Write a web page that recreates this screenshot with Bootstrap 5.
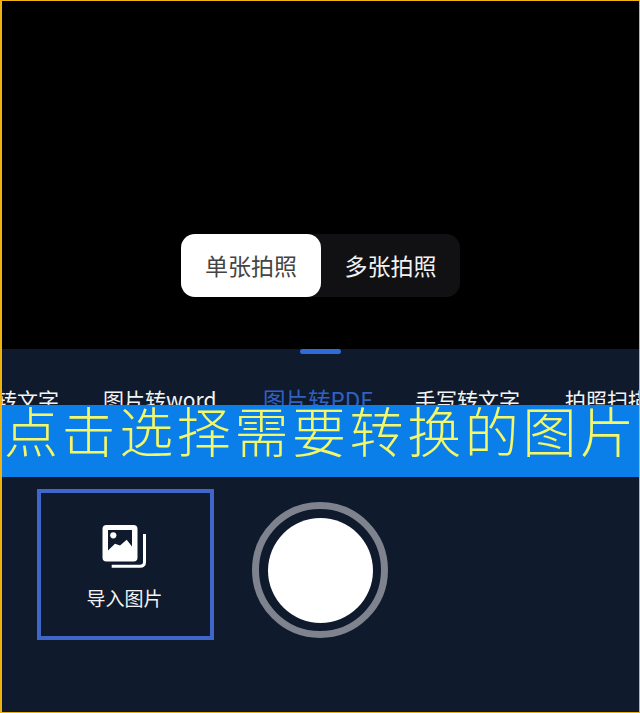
<!DOCTYPE html>
<html lang="zh-CN">
<head>
<meta charset="utf-8">
<title>图片转PDF</title>
<link href="https://cdn.jsdelivr.net/npm/bootstrap@5.3.0/dist/css/bootstrap.min.css" rel="stylesheet">
<style>
html,body{height:100%;margin:0;background:#000;font-family:"Noto Sans CJK SC","Liberation Sans",sans-serif;}
.shell{height:713px;width:640px;border:solid #eeb311;border-width:1px 1px 1px 2px;overflow:hidden;background:#000;}
.viewfinder{height:347px;padding-top:233px;}
.mode-switch{width:279px;height:63px;margin-left:179px;background:#111114;border-radius:14px;}
.mode-item{width:140px;font-size:23px;color:#f2f2f2;}
.mode-on{background:#fff;color:#444;border-radius:14px;}
.mode-off{width:139px;}
.panel{height:364px;background:#0f1a2d;}
.grab{width:41px;height:5px;margin:1px auto 0;background:#2f6cd8;border-radius:3px;}
.tabs{height:51px;padding-top:30px;overflow:hidden;font-size:21px;line-height:30px;color:#f4f4f4;white-space:nowrap;}
.tab-cut{margin-left:-6px;width:58px;margin-right:49px;}
.tab-a{width:112px;margin-right:48px;}
.tab-b{width:113px;margin-right:39px;color:#2f62c4;font-size:22.5px;}
.tab-c{width:104px;margin-right:46px;}
.banner{height:72px;background:#0b7fe9;color:#f3f768;font-family:"Liberation Serif","Noto Sans CJK SC",serif;font-weight:300;font-size:54px;line-height:60px;letter-spacing:3.6px;padding-left:2px;white-space:nowrap;overflow:hidden;}
.tools{padding:12px 0 0 35px;gap:38px;}
.import-box{width:177px;height:151px;border:4px solid #3f66c8;color:#f4f4f4;font-size:19px;line-height:26px;padding:4.5px 2px 0 0;}
.import-icon{width:48px;height:48px;margin:0 1px 13.5px 0;}
.shutter{width:136px;height:136px;margin-top:13px;border:7.5px solid #7e838e;border-radius:50%;}
.shutter-core{width:105px;height:105px;background:#fff;border-radius:50%;}
</style>
</head>
<body>
<div class="shell">
  <div class="viewfinder">
    <div class="mode-switch d-flex">
      <div class="mode-item mode-on d-flex align-items-center justify-content-center">单张拍照</div>
      <div class="mode-item mode-off d-flex align-items-center justify-content-center">多张拍照</div>
    </div>
  </div>
  <div class="panel">
    <div class="grab"></div>
    <div class="tabs d-flex">
      <div class="tab-cut text-end flex-shrink-0">转文字</div>
      <div class="tab-a flex-shrink-0">图片转word</div>
      <div class="tab-b flex-shrink-0">图片转PDF</div>
      <div class="tab-c flex-shrink-0">手写转文字</div>
      <div class="flex-shrink-0">拍照扫描</div>
    </div>
    <div class="banner">点击选择需要转换的图片</div>
    <div class="tools d-flex">
      <div class="import-box d-flex flex-column align-items-center justify-content-center">
        <svg class="import-icon" viewBox="0 0 48 48" aria-hidden="true">
          <path d="M11.7 43.3H40Q44.5 43.3 44.5 39V11" fill="none" stroke="#fff" stroke-width="3"/>
          <rect x="2.5" y="2" width="35" height="36.5" rx="4" fill="#fff"/>
          <path d="M8 7H32V23.5L26.7 16.7L20 22.5L15 20.7L8 27.5Z" fill="#0f1a2d"/>
          <circle cx="13.3" cy="12.3" r="3.1" fill="#fff"/>
        </svg>
        <div>导入图片</div>
      </div>
      <div class="shutter d-flex align-items-center justify-content-center">
        <div class="shutter-core"></div>
      </div>
    </div>
  </div>
</div>
<script src="https://cdn.jsdelivr.net/npm/bootstrap@5.3.0/dist/js/bootstrap.bundle.min.js"></script>
</body>
</html>
